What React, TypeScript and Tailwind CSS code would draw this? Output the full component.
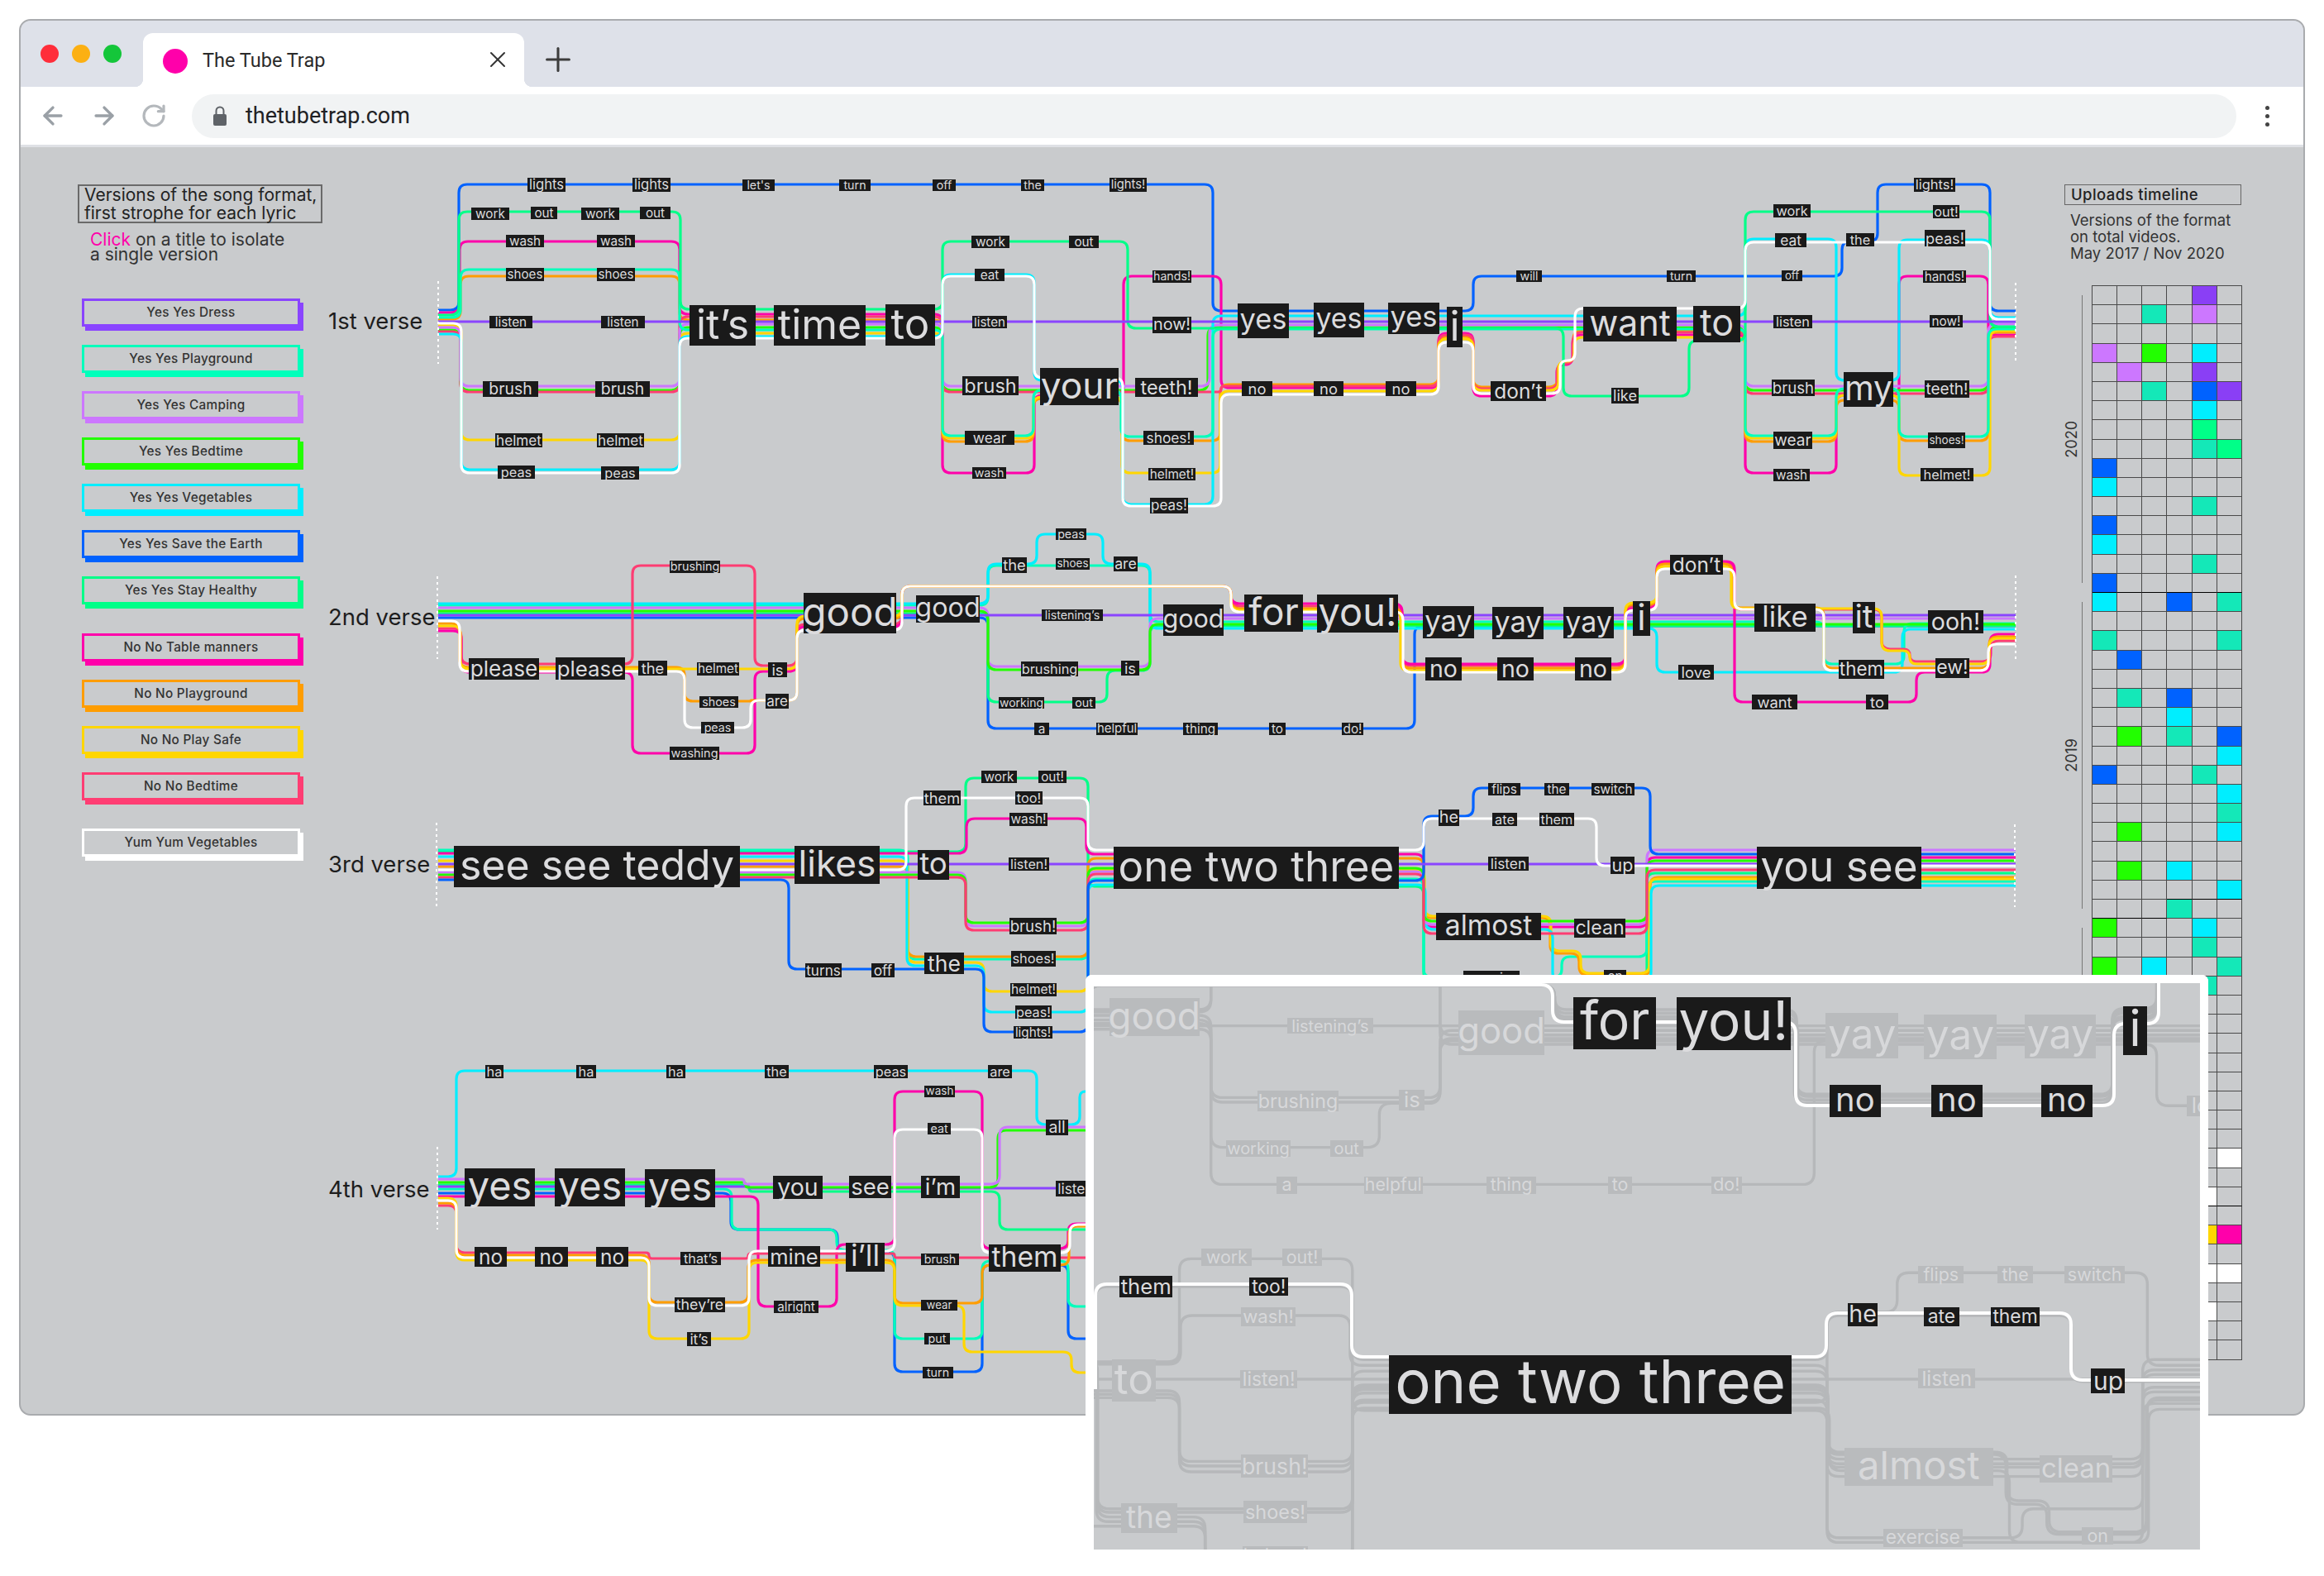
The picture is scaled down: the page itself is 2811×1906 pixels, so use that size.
import React from 'react';
import { ArrowLeft, ArrowRight, RotateCw, X, Plus } from 'lucide-react';

const C: Record<string, string> = {
  V: '#8a44ff', P: '#00ffbb', C: '#cc77ff', B: '#22ff00', G: '#00eeff', E: '#0062ff',
  H: '#00ff88', M: '#ff00aa', O: '#ff9d00', Y: '#ffd600', R: '#ff3d73', W: '#ffffff',
};

type Route = [string, number[]];
type Lbl = [string, number, number, number, number, number?];

const v1R: Route[] = [
  ['E', [530,375,555,223,1467,376,1782,334,2228,292,2271,223,2407,376,2438]],
  ['M', [530,378,556,292,822,380,1140,572,1251,478,1359,334,1477,469,1740,403,1782,479,1883,441,1902,405,2111,572,2221,478,2297,334,2405,405,2438]],
  ['O', [530,386,557,334,822,387,1140,534,1250,482,1357,533,1476,465,1740,407,1782,468,1884,439,1903,400,2111,534,2221,484,2297,533,2405,402,2438]],
  ['B', [530,399,557,472,822,396,1140,472,1461,396,2111,472,2405,396,2438]],
  ['R', [530,401,557,474,822,383,1140,474,1477,467,1740,405,1782,470,1884,439,1903,402,2111,476,2405,407,2438]],
  ['Y', [530,393,558,532,822,403,1140,530,1250,480,1357,572,1476,473,1740,410,1782,472,1885,437,1904,408,2111,530,2221,478,2297,575,2407,400,2438]],
  ['C', [530,396,557,467,822,392,1140,467,1463,393,2111,467,2405,392,2438]],
  ['G', [530,404,558,568,822,407,1140,332,1251,460,1358,610,1467,382,2111,289,2221,460,2297,290,2407,384,2438]],
  ['P', [530,384,557,326,822,399,1140,527,1250,472,1356,528,1467,398,2111,527,2221,470,2297,528,2405,398,2438]],
  ['H', [530,381,555,256,823,374,1140,292,1364,397,1891,479,2043,412,2111,256,2407,395,2438]],
  ['V', [530,389,2438]],
  ['W', [530,391,558,572,822,409,1140,334,1251,457,1358,612,1477,477,1740,414,1782,476,1887,436,1905,373,2111,293,2407,386,2438]],
];
const v1L: Lbl[] = [
  ['lights',638,684,215,232],['lights',765,811,215,232],["let's",898,937,217,231],['turn',1015,1053,217,231],['off',1128,1156,217,231],['the',1235,1263,217,231],['lights!',1342,1387,215,232],
  ['work',570,616,251,266],['out',642,674,250,265],['work',703,749,251,266],['out',774,811,250,265],['wash',612,658,284,299],['wash',722,768,284,299],['shoes',612,658,324,340],['shoes',722,768,324,340],
  ['listen',592,644,382,397],['listen',727,780,382,397],['brush',584,651,461,480],['brush',720,786,461,480],['helmet',599,656,524,541],['helmet',722,779,524,541],['peas',602,647,563,579],['peas',727,773,564,580],
  ['it’s',834,914,369,418],['time',936,1047,369,418],['to',1071,1131,368,418],
  ['work',1175,1221,285,300],['out',1293,1329,285,300],['eat',1179,1215,325,340],['listen',1176,1218,382,397],['brush',1164,1232,455,478],['wear',1167,1227,521,538],['wash',1176,1217,565,579],['your',1258,1353,445,490],
  ['hands!',1394,1441,327,342],['now!',1394,1441,383,403],['teeth!',1373,1449,457,480],['shoes!',1383,1444,521,538],['helmet!',1389,1446,566,581],['peas!',1391,1437,602,621],
  ['yes',1497,1559,367,409],['yes',1589,1650,366,408],['yes',1679,1741,366,404],['i',1750,1769,371,420],['no',1502,1539,461,479],['no',1589,1625,461,479],['no',1676,1713,461,479],
  ['will',1834,1865,327,341],['turn',2016,2051,327,341],['off',2155,2180,327,340],['don’t',1803,1870,461,485],['like',1949,1982,469,488],['want',1915,2028,371,413],['to',2048,2105,370,414],
  ['work',2145,2190,247,263],['out!',2338,2370,248,264],['lights!',2315,2365,215,232],['eat',2147,2185,282,299],['the',2233,2267,282,298],['peas!',2328,2377,278,298],['hands!',2326,2378,327,342],['listen',2145,2192,381,397],['now!',2334,2374,381,396],
  ['brush',2143,2195,459,479],['teeth!',2328,2382,460,481],['my',2230,2290,450,492],['wear',2145,2192,522,543],['shoes!',2332,2377,523,542],['wash',2145,2189,567,582],['helmet!',2323,2387,566,582],
];

const v2R: Route[] = [
  ['E', [530,747,1195,881,1711,757,2438]],
  ['H', [530,742,1195,849,1339,811,1391,757,2438]],
  ['P', [530,732,1195,684,1391,752,2206,803,2303,754,2438]],
  ['G', [530,730,1195,682,1254,646,1334,682,1391,760,2004,813,2301,761,2438]],
  ['C', [530,735,1195,806,1391,748,2438]],
  ['B', [530,739,1195,810,1391,755,2438]],
  ['V', [530,744,2438]],
  ['R', [530,760,558,803,765,684,913,805,964,755,1091,709,1489,733,1696,805,1966,733,2004,681,2097,737,2276,785,2310,800,2408,775,2438]],
  ['M', [530,763,558,813,765,911,913,812,964,758,1091,709,1489,730,1696,803,1966,736,2004,679,2098,849,2318,813,2407,767,2438]],
  ['O', [530,754,556,807,828,848,908,847,964,748,1091,709,1489,736,1695,808,1966,731,2004,682,2095,735,2206,808,2406,770,2438]],
  ['Y', [530,757,557,809,964,745,1091,709,1489,738,1694,811,1966,729,2004,685,2094,736,2276,787,2310,803,2406,772,2438]],
  ['W', [530,751,556,812,828,880,908,847,964,762,1091,709,1489,740,1697,813,1966,738,2004,688,2098,737,2206,811,2405,779,2438]],
];
const v2L: Lbl[] = [
  ['please',567,652,796,822],['please',672,756,795,822],['the',772,807,799,817],['helmet',843,894,801,817],['shoes',846,893,842,856],['peas',848,888,873,887],['is',929,952,801,819],['are',926,954,839,857],['brushing',810,871,678,693],['washing',810,870,903,919],
  ['good',972,1084,717,766],['good',1108,1185,720,753],['the',1212,1242,674,693],['shoes',1277,1318,675,689],['are',1347,1376,673,691],['peas',1277,1314,639,653],['listening’s',1260,1334,737,751],['brushing',1235,1304,800,818],['is',1356,1378,799,817],['working',1208,1263,843,857],['out',1297,1325,843,857],
  ['a',1251,1269,874,889],['helpful',1326,1376,874,889],['thing',1431,1473,874,889],['to',1535,1555,874,889],['do!',1623,1649,874,889],['good',1407,1480,731,769],
  ['for',1505,1576,719,764,1],['you!',1593,1691,719,765,1],['yay',1721,1783,733,772],['yay',1805,1867,734,773],['yay',1891,1952,734,772],['no',1724,1768,795,823,1],['no',1811,1855,795,823,1],['no',1905,1949,795,823,1],['i',1975,1996,727,769,1],
  ['don’t',2020,2084,671,695],['like',2122,2196,730,764],['love',2030,2073,804,822],['it',2241,2268,728,766],['them',2224,2279,798,821],['want',2119,2174,840,858],['to',2257,2284,840,858],['ooh!',2332,2399,738,766],['ew!',2341,2382,796,820],
];

const v3R: Route[] = [
  ['H', [530,1030,1168,941,1316,1072,1722,1186,1992,1056,2438]],
  ['P', [530,1028,1098,1160,1316,1063,1722,1182,1889,1157,1992,1066,2438]],
  ['M', [530,1032,1169,990,1314,1033,1722,1121,1992,1037,2438]],
  ['O', [530,1048,1098,1157,1316,1038,1722,1110,1875,1153,1910,1179,1996,1061,2438]],
  ['Y', [530,1041,1098,1164,1190,1199,1316,1052,1723,1108,1876,1150,1912,1177,1995,1063,2438]],
  ['G', [530,1036,1097,1168,1190,1224,1316,1070,1724,1124,1878,1186,1997,1071,2438]],
  ['C', [530,1055,1168,1120,1316,1054,1722,1118,1992,1028,2438]],
  ['B', [530,1058,1168,1116,1316,1050,1722,1114,1992,1041,2438]],
  ['R', [530,1061,1168,1125,1316,1057,1722,1129,1992,1052,2438]],
  ['E', [530,1064,954,1172,1190,1248,1316,1065,1722,987,1782,953,1996,1033,2438]],
  ['V', [530,1045,2438]],
  ['W', [530,1052,1096,965,1316,1028,1722,990,1931,1047,2438]],
];
const v3L: Lbl[] = [
  ['see see teddy',549,895,1023,1073],['likes',961,1064,1023,1069],['to',1110,1148,1028,1064],['them',1117,1162,956,974,1],['too!',1228,1261,957,973,1],['work',1187,1230,932,947],['out!',1256,1290,932,947],['wash!',1221,1267,983,999],['listen!',1220,1269,1037,1053],['brush!',1221,1278,1110,1130],['shoes!',1223,1277,1150,1169],['helmet!',1222,1278,1189,1205],['peas!',1228,1272,1216,1232],['lights!',1226,1273,1241,1256],['the',1118,1166,1152,1178],['turns',974,1018,1165,1182],['off',1054,1082,1165,1182],
  ['one two three',1347,1692,1024,1075,1],['he',1740,1765,979,999,1],['flips',1800,1839,947,962],['the',1868,1898,947,962],['switch',1925,1977,947,962],['ate',1805,1835,983,999,1],['them',1862,1904,983,999,1],['listen',1800,1849,1036,1053],['up',1948,1977,1036,1057,1],['almost',1737,1864,1104,1137],['clean',1904,1966,1111,1134],['exercise',1770,1838,1174,1190],['on',1940,1967,1173,1188],['you see',2125,2324,1024,1075],
];

const v4R: Route[] = [
  ['G', [530,1423,552,1295,1254,1360,1306,1320,1320]],
  ['E', [530,1443,884,1487,1013,1514,1082,1659,1188,1530,1292,1619,1320]],
  ['P', [530,1438,885,1487,1012,1512,1082,1619,1188,1525,1292,1580,1320]],
  ['M', [530,1447,917,1580,1012,1505,1082,1320,1188,1510,1292,1480,1320]],
  ['H', [530,1433,906,1441,1209,1487,1320]],
  ['V', [530,1435,906,1437,1320]],
  ['B', [530,1430,902,1436,1207,1367,1320]],
  ['C', [530,1426,900,1432,1209,1363,1320]],
  ['R', [530,1458,552,1515,785,1522,905,1516,1082,1521,1320]],
  ['O', [530,1455,552,1518,785,1575,905,1524,1082,1576,1188,1530,1293,1483,1320]],
  ['Y', [530,1449,552,1524,785,1619,906,1527,1082,1579,1166,1635,1296,1660,1320]],
  ['W', [530,1452,552,1521,785,1579,906,1513,1082,1366,1188,1515,1294,1481,1320]],
];
const v4L: Lbl[] = [
  ['ha',587,609,1288,1304],['ha',697,721,1288,1304],['ha',806,829,1288,1304],['the',925,954,1288,1304],['peas',1057,1098,1288,1304],['are',1195,1224,1288,1304],['wash',1118,1155,1313,1327],['eat',1122,1150,1358,1372],['all',1265,1292,1354,1373],
  ['yes',562,647,1413,1459],['yes',671,756,1413,1459],['yes',780,865,1414,1460],['you',935,995,1422,1450],['see',1027,1078,1422,1449],['i’m',1114,1161,1422,1449],['listen',1277,1325,1428,1447],
  ['no',574,613,1508,1532],['no',647,687,1508,1532],['no',721,760,1508,1532],['that’s',823,872,1514,1530],['mine',929,992,1507,1532],['i’ll',1023,1070,1503,1538],['brush',1114,1160,1516,1530],['them',1196,1283,1505,1538],['they’re',816,877,1569,1587],['alright',936,990,1573,1588],['wear',1114,1158,1572,1585],['it’s',831,860,1611,1628],['put',1118,1149,1612,1626],['turn',1116,1153,1653,1667],
];

const verses: [string, number][] = [['1st verse', 388], ['2nd verse', 746], ['3rd verse', 1045], ['4th verse', 1438]];
const dots: [number, number, number][] = [[530,340,440],[2438,342,438],[529,697,797],[2438,696,797],[528,995,1098],[2437,997,1097],[529,1387,1487]];

function toD(a: number[], R = 10) {
  let x = a[0], y = a[1];
  const raw: number[][] = [[x, y]];
  for (let i = 2; i < a.length; i++) {
    if (i % 2 === 0) x = a[i]; else y = a[i];
    raw.push([x, y]);
  }
  const p = raw.filter((q, i) => i === 0 || q[0] !== raw[i - 1][0] || q[1] !== raw[i - 1][1]);
  let d = `M${p[0][0]} ${p[0][1]}`;
  for (let i = 1; i < p.length - 1; i++) {
    const [a0, a1] = p[i - 1], [b0, b1] = p[i], [c0, c1] = p[i + 1];
    const l1 = Math.hypot(b0 - a0, b1 - a1), l2 = Math.hypot(c0 - b0, c1 - b1);
    const r = Math.min(R, l1 / 2, l2 / 2);
    d += `L${b0 - ((b0 - a0) / l1) * r} ${b1 - ((b1 - a1) / l1) * r}Q${b0} ${b1} ${b0 + ((c0 - b0) / l2) * r} ${b1 + ((c1 - b1) / l2) * r}`;
  }
  const e = p[p.length - 1];
  return d + `L${e[0]} ${e[1]}`;
}

function est(t: string) {
  let s = 0;
  for (const c of t) {
    if ('il’\'!'.includes(c)) s += 0.27;
    else if ('tfr '.includes(c)) s += 0.36;
    else if ('mw'.includes(c)) s += 0.84;
    else s += 0.58;
  }
  return s;
}
const fit = (t: string, w: number, h: number) => Math.min(h * 1.02, (w - 2) / est(t));

function Word({ l, ox, oy, sx = 1, sy = 1, tx = 0, ty = 0, faded = false }: { l: Lbl; ox: number; oy: number; sx?: number; sy?: number; tx?: number; ty?: number; faded?: boolean }) {
  const x = l[1] * sx + tx, w = (l[2] - l[1]) * sx, y = l[3] * sy + ty, h = (l[4] - l[3]) * sy;
  return (
    <div
      className={`absolute flex items-center justify-center whitespace-nowrap leading-none ${faded ? 'bg-[#b9bbbd] text-[#d7d8da]' : 'bg-[#1a1a1a] text-[#dcdcde]'}`}
      style={{ left: x - ox, top: y - oy, width: w, height: h, fontSize: fit(l[0], w, h), paddingBottom: h > 30 ? h * 0.08 : 0 }}
    >
      {l[0]}
    </div>
  );
}

const legend: [string, string, string][] = [
  ['Yes Yes Dress', 'border-[#8a44ff] shadow-[4px_5px_0_#8a44ff]', ''],
  ['Yes Yes Playground', 'border-[#00ffbb] shadow-[4px_5px_0_#00ffbb]', ''],
  ['Yes Yes Camping', 'border-[#cc77ff] shadow-[4px_5px_0_#cc77ff]', ''],
  ['Yes Yes Bedtime', 'border-[#22ff00] shadow-[4px_5px_0_#22ff00]', ''],
  ['Yes Yes Vegetables', 'border-[#00eeff] shadow-[4px_5px_0_#00eeff]', ''],
  ['Yes Yes Save the Earth', 'border-[#0062ff] shadow-[4px_5px_0_#0062ff]', ''],
  ['Yes Yes Stay Healthy', 'border-[#00ff88] shadow-[4px_5px_0_#00ff88]', ''],
  ['No No Table manners', 'border-[#ff00aa] shadow-[4px_5px_0_#ff00aa]', 'mt-[13px]'],
  ['No No Playground', 'border-[#ff9d00] shadow-[4px_5px_0_#ff9d00]', ''],
  ['No No Play Safe', 'border-[#ffd600] shadow-[4px_5px_0_#ffd600]', ''],
  ['No No Bedtime', 'border-[#ff3d73] shadow-[4px_5px_0_#ff3d73]', ''],
  ['Yum Yum Vegetables', 'border-white shadow-[4px_5px_0_#ffffff]', 'mt-[12px]'],
];

const cellBg: Record<string, string> = {
  V: 'bg-[#8a3ff5]', P: 'bg-[#14e8b8]', C: 'bg-[#cc77ff]', B: 'bg-[#22ff00]', G: 'bg-[#00eeff]', E: 'bg-[#0062ff]',
  H: 'bg-[#00ff88]', M: 'bg-[#ff00aa]', Y: 'bg-[#ffd600]', W: 'bg-white',
};
const cells: Record<number, Record<number, string>> = {
  0:{4:'V'},1:{2:'P',4:'C'},3:{0:'C',2:'B',4:'G'},4:{1:'C',4:'V'},5:{2:'P',4:'E',5:'V'},6:{4:'G'},7:{4:'H'},8:{4:'P',5:'H'},9:{0:'E'},10:{0:'G'},11:{4:'P'},12:{0:'E'},13:{0:'G'},14:{4:'P'},15:{0:'E'},
  16:{0:'G',3:'E',5:'P'},18:{0:'P',5:'P'},19:{1:'E'},21:{1:'P',3:'E'},22:{3:'G'},23:{1:'B',3:'P',5:'E'},24:{5:'G'},25:{0:'E',4:'P'},26:{5:'G'},27:{5:'P'},28:{1:'B',5:'G'},30:{1:'B',3:'G'},31:{5:'G'},32:{3:'P'},33:{0:'B',4:'G'},34:{4:'P'},35:{0:'B',2:'G',5:'P'},36:{4:'P'},
  45:{5:'W'},47:{4:'W'},49:{4:'Y',5:'M'},51:{4:'W',5:'W'},53:{4:'W'},
};
const thick = (r: number, c: number) => r === 15 || (r === 31 && c >= 3) || (r === 32 && c < 3) || (r === 47 && c >= 4);

const rows = Array.from({ length: 56 }, (_, i) => i);
const cols = [0, 1, 2, 3, 4, 5];

function Lines({ routes, w = 3.2, mono }: { routes: Route[]; w?: number; mono?: string }) {
  return (
    <>
      {routes.map(([c, a], i) => (
        <path key={i} d={toD(a)} fill="none" stroke={mono || C[c]} strokeWidth={w} />
      ))}
    </>
  );
}

function Canvas() {
  const OX = 390, OY = 178;
  const all = [...v1L, ...v2L, ...v3L, ...v4L].filter(l => !(l[1] >= 1313 && l[3] >= 1179));
  return (
    <div className="relative w-[2050px] h-full shrink-0">
      <svg className="absolute left-0 top-0" width={2050} height={1533} viewBox={`${OX} ${OY} 2050 1533`}>
        <Lines routes={v1R} /><Lines routes={v2R} /><Lines routes={v3R} /><Lines routes={v4R} />
        {dots.map(([x, a, b], i) => (
          <line key={i} x1={x} x2={x} y1={a} y2={b} stroke="#ffffff" strokeWidth={2} strokeDasharray="3 4" />
        ))}
      </svg>
      {verses.map(([t, y]) => (
        <div key={t} className="absolute left-[7px] text-[27.5px] leading-[32px] text-[#1d1d1d] whitespace-nowrap" style={{ top: y - OY - 16 }}>{t}</div>
      ))}
      {all.map((l, i) => <Word key={i} l={l} ox={OX} oy={OY} />)}
    </div>
  );
}

function Panel() {
  const px = 1323, py = 1189;
  const inView = (l: Lbl, ty: number) => {
    const x1 = l[1] * 1.414 - 225, x2 = l[2] * 1.414 - 225, y1 = l[3] * 1.4 + ty, y2 = l[4] * 1.4 + ty;
    return x2 > px && x1 < px + 1338 && y2 > py && y1 < py + 685;
  };
  const labels2 = v2L.filter(l => inView(l, 199)), labels3 = v3L.filter(l => inView(l, 205));
  return (
    <div className="absolute left-[1313px] top-[1179px] w-[1358px] h-[695px] border-x-[10px] border-t-[10px] border-white rounded-t-[8px] bg-[#c9cbcd] overflow-hidden">
      <svg className="absolute left-0 top-0" width={1338} height={685} viewBox={`${px} ${py} 1338 685`}>
        <g transform="matrix(1.414 0 0 1.4 -225 199)"><Lines routes={v2R} w={2.4} mono="#b6b8ba" /></g>
        <g transform="matrix(1.414 0 0 1.4 -225 205)"><Lines routes={v3R} w={2.4} mono="#b6b8ba" /></g>
        <path d={toD([1323,1191,1878,1236,2172,1337,2557,1238,2611,1189], 14)} fill="none" stroke="#fff" strokeWidth={4} />
        <path d={toD([1325,1680,1325,1553,1635,1641,2209,1588,2505,1669,2661], 14)} fill="none" stroke="#fff" strokeWidth={4} />
      </svg>
      {labels2.map((l, i) => <Word key={i} l={l} ox={px} oy={py} sx={1.414} sy={1.4} tx={-225} ty={199} faded={!l[5]} />)}
      {labels3.map((l, i) => <Word key={i} l={l} ox={px} oy={py} sx={1.414} sy={1.4} tx={-225} ty={205} faded={!l[5]} />)}
    </div>
  );
}

export default function App() {
  return (
    <div className="relative w-[2811px] h-[1906px] bg-white overflow-hidden pl-[23px] pt-[23px] [font-family:Inter,sans-serif]">
      <div className="w-[2765px] h-[1689px] rounded-[14px] border-2 border-[#a9abae] overflow-hidden flex flex-col bg-[#c9cbcd]">
        <div className="h-[80px] shrink-0 bg-[#dee1e9] flex items-start">
          <div className="flex gap-[16px] ml-[24px] mt-[29px]">
            <span className="w-[22px] h-[22px] rounded-full bg-[#ff2d3a]" />
            <span className="w-[22px] h-[22px] rounded-full bg-[#fcb013]" />
            <span className="w-[22px] h-[22px] rounded-full bg-[#14c63a]" />
          </div>
          <div className="relative ml-[26px] mt-[15px] w-[461px] h-[65px] bg-white rounded-t-[12px] flex items-center pl-[24px] pr-[16px] pt-[3px] [font-family:Roboto,sans-serif] before:absolute before:bottom-0 before:-left-[10px] before:w-[10px] before:h-[10px] before:bg-[radial-gradient(circle_at_0_0,transparent_10px,white_10.5px)] after:absolute after:bottom-0 after:-right-[10px] after:w-[10px] after:h-[10px] after:bg-[radial-gradient(circle_at_100%_0,transparent_10px,white_10.5px)]">
            <span className="w-[30px] h-[30px] rounded-full bg-[#ff00aa] shrink-0" />
            <span className="ml-[18px] text-[23.5px] text-[#2a2a2a] flex-1">The Tube Trap</span>
            <X size={32} strokeWidth={1.5} className="text-[#333] -mt-[4px]" />
          </div>
          <Plus size={46} strokeWidth={1.6} className="ml-[18px] mt-[24px] text-[#3c3c3c]" />
        </div>
        <div className="h-[73px] shrink-0 bg-white border-b-[3px] border-[#dfe1e5] flex items-center pl-[22px] pr-[41px]">
          <ArrowLeft size={34} strokeWidth={2.4} className="text-[#9aa0a6]" />
          <ArrowRight size={34} strokeWidth={2.4} className="ml-[28px] text-[#9aa0a6]" />
          <RotateCw size={32} strokeWidth={2.4} className="ml-[27px] text-[#b4b8bc]" />
          <div className="ml-[30px] flex-1 h-[53px] rounded-full bg-[#f1f3f4] flex items-center pl-[26px]">
            <svg width="16" height="24" viewBox="0 0 16 24">
              <rect x="0" y="10" width="16" height="14" rx="2" fill="#5f6368" />
              <path d="M3.5 10V6a4.500 4.500 0 0 1 9 0v4" fill="none" stroke="#5f6368" strokeWidth="2" />
            </svg>
            <span className="ml-[23px] text-[27px] text-[#202124] [font-family:Roboto,sans-serif]">thetubetrap.com</span>
          </div>
          <div className="ml-[35px] flex flex-col gap-[5px]">
            <span className="w-[5px] h-[5px] rounded-full bg-[#444]" />
            <span className="w-[5px] h-[5px] rounded-full bg-[#444]" />
            <span className="w-[5px] h-[5px] rounded-full bg-[#444]" />
          </div>
        </div>
        <div className="flex-1 flex min-h-0">
          <div className="w-[365px] shrink-0 pl-[69px] pt-[45px] text-[#222]">
            <div className="border-2 border-[#6a6a6a] h-[47px] px-[6px] text-[21px] leading-[22px] whitespace-nowrap">
              Versions of the song format,<br />first strophe for each lyric
            </div>
            <div className="ml-[15px] mt-[11px] text-[21px] leading-[18px] text-[#333] whitespace-nowrap">
              <span className="text-[#ff00aa]">Click</span> on a title to isolate<br />a single version
            </div>
            <div className="ml-[5px] mt-[44px] w-[264px] flex flex-col gap-[22px]">
              {legend.map(([t, cls, m]) => (
                <div key={t} className={`h-[34px] border-[3px] flex items-center justify-center text-[15.3px] font-medium tracking-[0.3px] text-[#333] ${cls} ${m}`}>{t}</div>
              ))}
            </div>
          </div>
          <Canvas />
          <div className="flex-1 pl-[57px] pt-[45px] text-[#333]">
            <div className="w-[214px] h-[25px] border border-[#666] pl-[7px] text-[18.5px] leading-[23px] font-medium text-[#222] tracking-[0.4px] whitespace-nowrap">Uploads timeline</div>
            <div className="ml-[7px] mt-[8px] h-[89px] text-[18.5px] leading-[20px] whitespace-nowrap">
              Versions of the format<br />on total videos.<br />May 2017 / Nov 2020
            </div>
            <div className="flex">
              <div className="w-[22px] flex flex-col pt-[12px]">
                <div className="h-[348px] border-r border-[#777] flex items-center justify-start">
                  <span className="[writing-mode:vertical-rl] rotate-180 text-[18px] leading-[18px]">2020</span>
                </div>
                <div className="mt-[23px] h-[371px] border-r border-[#777] flex items-center justify-start">
                  <span className="[writing-mode:vertical-rl] rotate-180 text-[18px] leading-[18px]">2019</span>
                </div>
                <div className="mt-[23px] h-[523px] border-r border-[#777]" />
              </div>
              <div className="ml-[11px] w-[182px] grid grid-cols-6 auto-rows-[23.2px] border-t border-l border-[#4a4a4a]">
                {rows.map(r => cols.map(c => {
                  const v = cells[r]?.[c];
                  return (
                    <div key={`${r}-${c}`} className={`border-r border-b ${thick(r, c) ? 'border-b-black' : 'border-b-[#4a4a4a]'} border-r-[#4a4a4a] ${v ? cellBg[v] : ''}`} />
                  );
                }))}
              </div>
            </div>
          </div>
        </div>
      </div>
      <Panel />
    </div>
  );
}
